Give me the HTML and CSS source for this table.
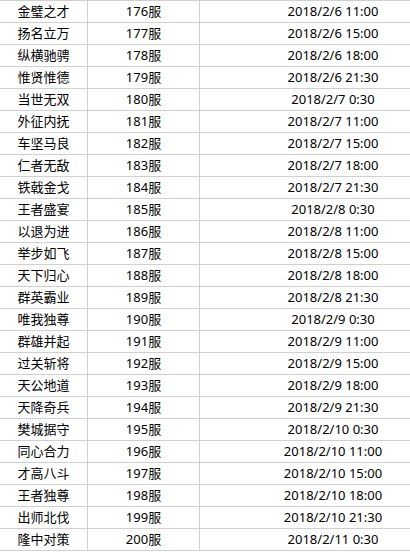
FILE: index.html
```html
<!DOCTYPE html>
<html lang="zh-CN">
<head>
<meta charset="utf-8">
<link rel="stylesheet" href="styles.css">
</head>
<body>
<div class="sheet" id="sheet">
<div class="row"><div class="c name">金璧之才</div><div class="c srv">176服</div><div class="c time">2018/2/6 11:00</div></div>
<div class="row"><div class="c name">扬名立万</div><div class="c srv">177服</div><div class="c time">2018/2/6 15:00</div></div>
<div class="row"><div class="c name">纵横驰骋</div><div class="c srv">178服</div><div class="c time">2018/2/6 18:00</div></div>
<div class="row"><div class="c name">惟贤惟德</div><div class="c srv">179服</div><div class="c time">2018/2/6 21:30</div></div>
<div class="row"><div class="c name">当世无双</div><div class="c srv">180服</div><div class="c time">2018/2/7 0:30</div></div>
<div class="row"><div class="c name">外征内抚</div><div class="c srv">181服</div><div class="c time">2018/2/7 11:00</div></div>
<div class="row"><div class="c name">车坚马良</div><div class="c srv">182服</div><div class="c time">2018/2/7 15:00</div></div>
<div class="row"><div class="c name">仁者无敌</div><div class="c srv">183服</div><div class="c time">2018/2/7 18:00</div></div>
<div class="row"><div class="c name">铁戟金戈</div><div class="c srv">184服</div><div class="c time">2018/2/7 21:30</div></div>
<div class="row"><div class="c name">王者盛宴</div><div class="c srv">185服</div><div class="c time">2018/2/8 0:30</div></div>
<div class="row"><div class="c name">以退为进</div><div class="c srv">186服</div><div class="c time">2018/2/8 11:00</div></div>
<div class="row"><div class="c name">举步如飞</div><div class="c srv">187服</div><div class="c time">2018/2/8 15:00</div></div>
<div class="row"><div class="c name">天下归心</div><div class="c srv">188服</div><div class="c time">2018/2/8 18:00</div></div>
<div class="row"><div class="c name">群英霸业</div><div class="c srv">189服</div><div class="c time">2018/2/8 21:30</div></div>
<div class="row"><div class="c name">唯我独尊</div><div class="c srv">190服</div><div class="c time">2018/2/9 0:30</div></div>
<div class="row"><div class="c name">群雄并起</div><div class="c srv">191服</div><div class="c time">2018/2/9 11:00</div></div>
<div class="row"><div class="c name">过关斩将</div><div class="c srv">192服</div><div class="c time">2018/2/9 15:00</div></div>
<div class="row"><div class="c name">天公地道</div><div class="c srv">193服</div><div class="c time">2018/2/9 18:00</div></div>
<div class="row"><div class="c name">天降奇兵</div><div class="c srv">194服</div><div class="c time">2018/2/9 21:30</div></div>
<div class="row"><div class="c name">樊城据守</div><div class="c srv">195服</div><div class="c time">2018/2/10 0:30</div></div>
<div class="row"><div class="c name">同心合力</div><div class="c srv">196服</div><div class="c time">2018/2/10 11:00</div></div>
<div class="row"><div class="c name">才高八斗</div><div class="c srv">197服</div><div class="c time">2018/2/10 15:00</div></div>
<div class="row"><div class="c name">王者独尊</div><div class="c srv">198服</div><div class="c time">2018/2/10 18:00</div></div>
<div class="row"><div class="c name">出师北伐</div><div class="c srv">199服</div><div class="c time">2018/2/10 21:30</div></div>
<div class="row"><div class="c name">隆中对策</div><div class="c srv">200服</div><div class="c time">2018/2/11 0:30</div></div>
</div>
</body>
</html>
```
FILE: styles.css
```css
html, body {
  margin: 0;
  padding: 0;
  background: #ffffff;
}
body {
  width: 410px;
  height: 552px;
  overflow: hidden;
}
.sheet {
  width: 410px;
  border-bottom: 1px solid #d0d0d0;
  font-family: "Noto Sans", "Noto Sans CJK SC", sans-serif;
  font-size: 13px;
  color: #000000;
}
.row {
  display: grid;
  grid-template-columns: 88px 112px 210px;
  height: 22px;
  box-sizing: border-box;
  border-top: 1px solid #d0d0d0;
}
.c {
  box-sizing: border-box;
  border-right: 1px solid #d0d0d0;
  display: flex;
  align-items: center;
  justify-content: center;
  line-height: 21px;
  white-space: nowrap;
  overflow: hidden;
}
.time {
  border-right: none;
  padding-left: 56px;
}
```
